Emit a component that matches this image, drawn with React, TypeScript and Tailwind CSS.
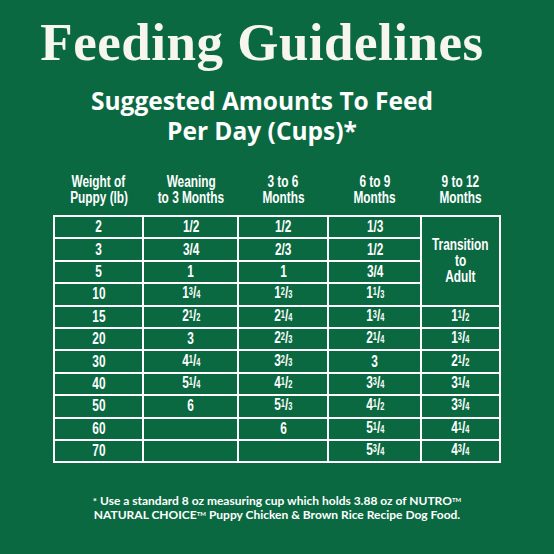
import React from "react";

const N = ({ children }: { children: React.ReactNode }) => (
  <span className="inline-block scale-x-[0.74] origin-center whitespace-nowrap">{children}</span>
);

const F = ({ w, n, d }: { w?: string; n: string; d: string }) => (
  <span>
    {w}
    <span className="relative top-[-3px] text-[10px]">{n}</span>
    <span>/</span>
    <span className="text-[10px]">{d}</span>
  </span>
);

type Cell = React.ReactNode;

const rows: Cell[][] = [
  ["2", "1/2", "1/2", "1/3"],
  ["3", "3/4", "2/3", "1/2"],
  ["5", "1", "1", "3/4"],
  ["10", <F w="1" n="3" d="4" />, <F w="1" n="2" d="3" />, <F w="1" n="1" d="3" />],
  ["15", <F w="2" n="1" d="2" />, <F w="2" n="1" d="4" />, <F w="1" n="3" d="4" />, <F w="1" n="1" d="2" />],
  ["20", "3", <F w="2" n="2" d="3" />, <F w="2" n="1" d="4" />, <F w="1" n="3" d="4" />],
  ["30", <F w="4" n="1" d="4" />, <F w="3" n="2" d="3" />, "3", <F w="2" n="1" d="2" />],
  ["40", <F w="5" n="1" d="4" />, <F w="4" n="1" d="2" />, <F w="3" n="3" d="4" />, <F w="3" n="1" d="4" />],
  ["50", "6", <F w="5" n="1" d="3" />, <F w="4" n="1" d="2" />, <F w="3" n="3" d="4" />],
  ["60", "", "6", <F w="5" n="1" d="4" />, <F w="4" n="1" d="4" />],
  ["70", "", "", <F w="5" n="3" d="4" />, <F w="4" n="3" d="4" />],
];

const cond = { fontFamily: '"Liberation Sans", Arial, sans-serif' };

const heads: [string, string][] = [
  ["Weight of", "Puppy (lb)"],
  ["Weaning", "to 3 Months"],
  ["3 to 6", "Months"],
  ["6 to 9", "Months"],
  ["9 to 12", "Months"],
];

export default function App() {
  return (
    <div className="w-[554px] h-[554px] bg-[#0b6942] text-[#f7f5ef] flex flex-col items-center overflow-hidden">
      <h1
        className="mt-[13px] mr-[30px] text-[53px] font-bold leading-[58px] tracking-[0.5px]"
        style={{ fontFamily: '"Liberation Serif", serif' }}
      >
        Feeding Guidelines
      </h1>
      <div
        className="mt-[15px] mr-[30px] text-[24.5px] font-bold leading-[30px] text-center text-white"
        style={{ fontFamily: '"Open Sans", sans-serif' }}
      >
        Suggested Amounts To Feed
        <br />
        Per Day (Cups)*
      </div>
      <table className="mt-[28px] border-collapse text-white font-bold text-center" style={cond}>
        <colgroup>
          <col className="w-[89px]" />
          <col className="w-[95px]" />
          <col className="w-[90px]" />
          <col className="w-[93px]" />
          <col className="w-[78px]" />
        </colgroup>
        <thead>
          <tr className="text-[16px] leading-[16px] align-top">
            {heads.map(([a, b], i) => (
              <th key={i} className="pb-[9px] font-bold">
                <N>{a}</N>
                <br />
                <N>{b}</N>
              </th>
            ))}
          </tr>
        </thead>
        <tbody className="text-[16px]">
          {rows.map((r, i) => (
            <tr key={i} className="h-[22.4px]">
              {r.map((c, j) => (
                <td key={j} className="border-2 border-white p-0 leading-[18px]">
                  <N>{c}</N>
                </td>
              ))}
              {i === 0 && (
                <td rowSpan={4} className="border-2 border-white p-0 leading-[16px] text-[16px]">
                  <N>Transition</N>
                  <br />
                  <N>to</N>
                  <br />
                  <N>Adult</N>
                </td>
              )}
            </tr>
          ))}
        </tbody>
      </table>
      <div
        className="mt-[31px] text-[12px] font-bold leading-[14px] text-center text-white"
        style={{ fontFamily: 'Lato, sans-serif' }}
      >
        <span className="text-[10px] align-top">*</span> Use a standard 8 oz measuring cup which holds 3.88 oz of NUTRO
        <sup className="text-[6px]">TM</sup>
        <br />
        NATURAL CHOICE<sup className="text-[6px]">TM</sup> Puppy Chicken &amp; Brown Rice Recipe Dog Food.
      </div>
    </div>
  );
}
